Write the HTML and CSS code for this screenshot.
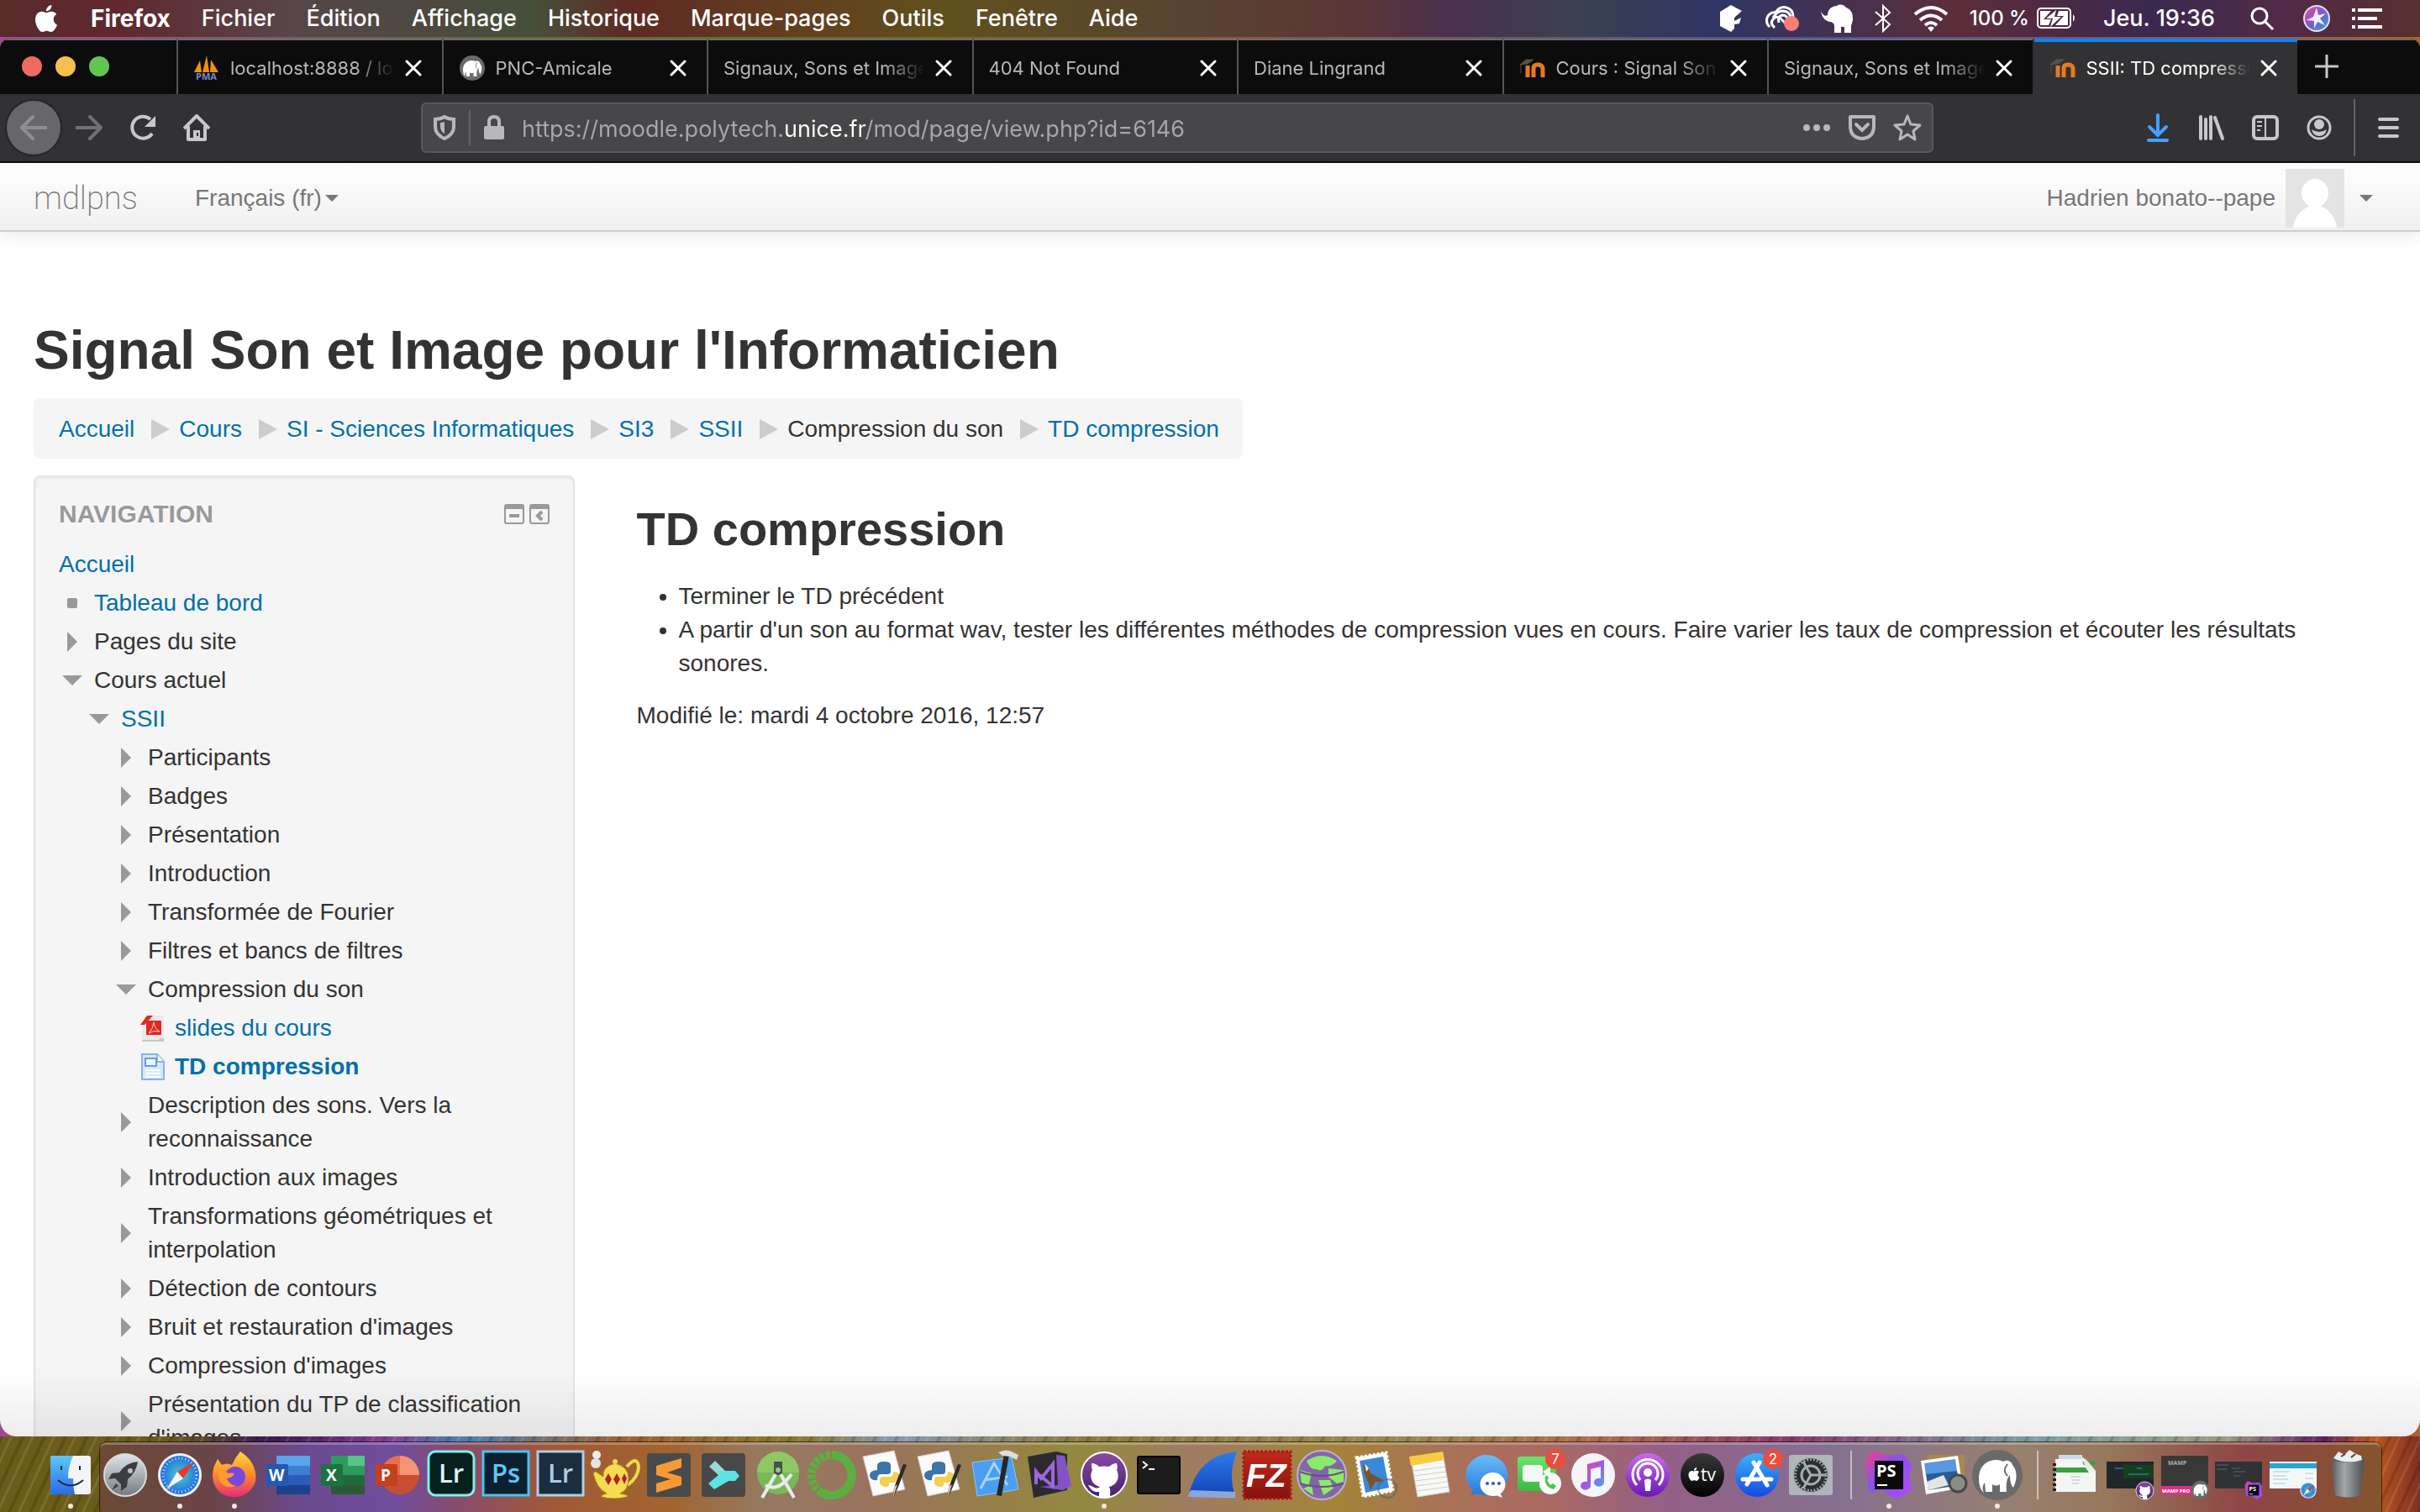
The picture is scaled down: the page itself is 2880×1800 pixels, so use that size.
FILE: index.html
```html
<!DOCTYPE html>
<html lang="fr">
<head>
<meta charset="utf-8">
<title>SSII: TD compression</title>
<link rel="stylesheet" href="styles.css">
</head>
<body>
<svg class="defs" width="0" height="0" aria-hidden="true">
  <defs>
    <linearGradient id="gFinder" x2="0" y2="1"><stop offset="0" stop-color="#5cc8fa"/><stop offset="1" stop-color="#2a6be8"/></linearGradient>
    <linearGradient id="gSilver" x2="0" y2="1"><stop offset="0" stop-color="#dfe6ea"/><stop offset="1" stop-color="#767a7c"/></linearGradient>
    <radialGradient id="gSafari"><stop offset="0" stop-color="#4fd0c8"/><stop offset="1" stop-color="#1f6be0"/></radialGradient>
    <linearGradient id="gFox" x2="0" y2="1"><stop offset="0" stop-color="#ffd83a"/><stop offset=".5" stop-color="#ff8a2a"/><stop offset="1" stop-color="#e5297c"/></linearGradient>
    <linearGradient id="gBlue" x2="0" y2="1"><stop offset="0" stop-color="#6bbcf8"/><stop offset="1" stop-color="#2a78d8"/></linearGradient>
    <linearGradient id="gStore" x2="0" y2="1"><stop offset="0" stop-color="#3cb4fb"/><stop offset="1" stop-color="#1648e0"/></linearGradient>
    <linearGradient id="gGreen" x2="0" y2="1"><stop offset="0" stop-color="#68e56a"/><stop offset="1" stop-color="#3bb944"/></linearGradient>
    <linearGradient id="gPod" x2="0" y2="1"><stop offset="0" stop-color="#c86cf0"/><stop offset="1" stop-color="#6a18b4"/></linearGradient>
    <linearGradient id="gTv" x2="0" y2="1"><stop offset="0" stop-color="#3a3a3c"/><stop offset="1" stop-color="#000"/></linearGradient>
    <linearGradient id="gRed" x2="0" y2="1"><stop offset="0" stop-color="#c22a1c"/><stop offset="1" stop-color="#86130c"/></linearGradient>
    <linearGradient id="gStorm" x2="1" y2="1"><stop offset="0" stop-color="#ff3c82"/><stop offset=".4" stop-color="#8a50f0"/><stop offset="1" stop-color="#b24af8"/></linearGradient>
    <linearGradient id="gNote" x2="1" y2="1"><stop offset="0" stop-color="#f8466c"/><stop offset=".55" stop-color="#9a5cf0"/><stop offset="1" stop-color="#38b4f8"/></linearGradient>
    <linearGradient id="gGit" x2="0" y2="1"><stop offset="0" stop-color="#8a4ca4"/><stop offset="1" stop-color="#43206c"/></linearGradient>
    <linearGradient id="gSiri" x2="1" y2="1"><stop offset="0" stop-color="#f04a90"/><stop offset=".5" stop-color="#7a5ad0"/><stop offset="1" stop-color="#2aa8d8"/></linearGradient>
    <linearGradient id="gTrash" x2="1" y2="0"><stop offset="0" stop-color="#55585a"/><stop offset=".4" stop-color="#a4a8aa"/><stop offset="1" stop-color="#4c4f51"/></linearGradient>
    <linearGradient id="gShark" x2="0" y2="1"><stop offset="0" stop-color="#2c7cf0"/><stop offset="1" stop-color="#1243b0"/></linearGradient>
  </defs>
  <symbol id="apple" viewBox="0 0 24 24"><path fill="currentColor" d="M12.152 6.896c-.948 0-2.415-1.078-3.96-1.04-2.04.027-3.91 1.183-4.961 3.014-2.117 3.675-.546 9.103 1.519 12.09 1.013 1.454 2.208 3.09 3.792 3.039 1.52-.065 2.09-.987 3.935-.987 1.831 0 2.35.987 3.96.948 1.637-.026 2.676-1.48 3.676-2.948 1.156-1.688 1.636-3.325 1.662-3.415-.039-.013-3.182-1.221-3.22-4.857-.026-3.04 2.48-4.494 2.597-4.559-1.429-2.09-3.623-2.324-4.39-2.376-2-.156-3.675 1.09-4.61 1.09zM15.53 3.83c.843-1.012 1.4-2.427 1.245-3.83-1.207.052-2.662.805-3.532 1.818-.78.896-1.454 2.338-1.273 3.714 1.338.104 2.715-.688 3.559-1.701"/></symbol>
  <symbol id="close" viewBox="0 0 20 20"><path d="M2 2l16 16M18 2L2 18" stroke="#fff" stroke-width="3" stroke-linecap="round"/></symbol>
  <symbol id="elephant" viewBox="0 0 40 34"><path fill="#fff" d="M20 2c4-3 9-1 11 2 6 2 8 7 8 13 0 5-2 7-2 10v7h-8v-7h-4v7h-8v-8c0-3-2-4-4-5-6 0-11-5-12-13 2 5 5 7 8 5 0-6 4-11 11-11z"/></symbol>
  <symbol id="mamp" viewBox="0 0 64 64"><circle cx="32" cy="32" r="30" fill="#6a6a6a"/><path fill="#fff" d="M10 36c0-15 10-22 21-22 4 0 6 1 8 2 5-3 10 0 11 4 6 7 6 17 1 27-3-3-4-9-4-15-3 3-5 8-4 20h-8v-9c-3 2-6 2-9 0v9h-8l-1-11c-3 4-3 8-1 12-4-3-6-9-6-17z"/><path d="M44 19c-4 5-5 9 0 14" fill="none" stroke="#6a6a6a" stroke-width="2"/></symbol>
  <symbol id="moodle" viewBox="0 0 32 32"><path d="M10 27V13M17 27V16q0-4 5-4t6 4v11" fill="none" stroke="#e87a1e" stroke-width="5"/><path d="M1 12L8 6l9 0-7 5zM2 12v10" fill="#54504c" stroke="#54504c" stroke-width="1"/></symbol>
  <symbol id="cat" viewBox="0 0 64 64"><circle cx="32" cy="32" r="27" fill="url(#gGit)" stroke="#fff" stroke-width="2"/><path fill="#fff" d="M17 18c4 0 7 2 9 4q6-1 12 0c2-2 5-4 9-4 1 4 1 6 0 8 4 8 1 18-9 20 2 3 1 8 1 13H26v-7c-7 1-10-3-13-8 5 0 7 5 13 3l1-1c-10-2-13-12-9-20-1-2-1-4-1-8z"/></symbol>
  <symbol id="safari" viewBox="0 0 64 64"><circle cx="32" cy="32" r="26" fill="#eef1f4"/><circle cx="32" cy="32" r="23" fill="url(#gSafari)"/><circle cx="32" cy="32" r="20" fill="none" stroke="#c9e4fa" stroke-width="3" stroke-dasharray="1 3"/><path d="M49 16L36 36l-7-8z" fill="#e8382e"/><path d="M16 49l13-21 7 8z" fill="#f4f4f4"/></symbol>
  <symbol id="storm" viewBox="0 0 64 64"><path fill="url(#gStorm)" d="M4 16L12 3l19 6 18-2 10 12-3 16 4 14-19 12L24 50 8 52z"/><path fill="#0a0a0a" d="M15 15h34v34H15z"/><text x="17" y="34" fill="#fff" class="ic" font-size="20">PS</text><path fill="#fff" d="M18 43h12v2H18z"/></symbol>
  <symbol id="python" viewBox="0 0 64 64"><path fill="#fbfbfb" stroke="#ccc" d="M4 10l37-7 13 46-38 8z"/><path d="M21 29v-8q0-5 8-5t8 4v8q0 3-4 3h-8q-4 0-4 7-8 1-9-5t9-7z" fill="#3a74a8"/><path d="M24 42v-4q0-4 4-4h8q4 0 4-6 7 0 8 6t-8 7h-5q1 5-4 5t-7-4z" fill="#f3cf4c"/><path d="M56 20L46 46l-6 13 1-12 11-28z" fill="#2a2a2a"/><path d="M45 43l-5 16 1-13z" fill="#d8c8a0"/></symbol>
</svg>

<header class="menubar">
  <nav class="menus">
    <button class="apple" aria-label="Pomme"><svg width="32" height="32"><use href="#apple"/></svg></button>
    <button class="app">Firefox</button>
    <button>Fichier</button>
    <button>Édition</button>
    <button>Affichage</button>
    <button>Historique</button>
    <button>Marque-pages</button>
    <button>Outils</button>
    <button>Fenêtre</button>
    <button>Aide</button>
  </nav>
  <div class="status">
    <svg width="28" height="32" viewBox="0 0 28 32"><path fill="#fff" d="M1 8L14 0l13 7-9 8v4l8-4-2 7-6 1v5l-4 4-13-7z"/></svg>
    <svg width="44" height="32" viewBox="0 0 44 32"><path d="M8 26q-6-6-2-13 4-5 9-4 5-8 13-6 8 2 8 11M14 27q-6-5-2-10 4-5 9-1l6 6M12 15q5-8 12-8 9 1 9 9M19 21q-2-8 4-9 5 0 7 5" fill="none" stroke="#fff" stroke-width="3"/><circle cx="34" cy="22" r="9" fill="#fb7d78"/></svg>
    <svg width="40" height="34"><use href="#elephant"/></svg>
    <svg width="22" height="34" viewBox="0 0 22 34"><path d="M2 9l17 15-8 8V2l8 8L2 25" fill="none" stroke="#fff" stroke-width="2"/></svg>
    <svg width="44" height="32" viewBox="0 0 44 32"><path d="M3 11q19-16 38 0M9 18q13-11 26 0M15 24q7-6 14 0" fill="none" stroke="#fff" stroke-width="4"/><path d="M18 27q4-3 8 0l-4 5z" fill="#fff"/></svg>
    <span class="charge">100 % <svg width="48" height="28" viewBox="0 0 48 28"><rect x="2" y="2" width="39" height="23" rx="4" fill="none" stroke="#fff" stroke-width="2"/><path fill="#fff" d="M5 5h13L9 15h9l-3 7H5zM27 5h11v17H23l10-11h-8zM44 9q4 4 0 9z"/><path fill="#fff" d="M24 4L12 14h8l-3 10 13-12h-8z"/></svg></span>
    <span class="clock">Jeu. 19:36</span>
    <svg class="search" width="32" height="32" viewBox="0 0 32 32"><circle cx="13" cy="13" r="9" fill="none" stroke="#fff" stroke-width="3"/><path d="M20 20l9 9" stroke="#fff" stroke-width="3"/></svg>
    <svg width="34" height="34" viewBox="0 0 34 34"><circle cx="17" cy="17" r="15" fill="url(#gSiri)" stroke="#e8e0f0" stroke-width="2"/><path d="M17 4l2 9 9-2-7 6 6 8-9-4-4 8 0-9-9-1 8-4z" fill="#fff" opacity=".9"/></svg>
    <svg width="38" height="32" viewBox="0 0 38 32"><path d="M1 6h4M8 6h29M1 16h4M8 16h23M1 26h4M8 26h29" stroke="#fff" stroke-width="4"/></svg>
  </div>
</header>

<div class="window">
  <div class="tabbar">
    <div class="lights"><button class="light red" aria-label="Fermer"></button><button class="light yellow" aria-label="Réduire"></button><button class="light green" aria-label="Agrandir"></button></div>
    <div class="tabs">
      <div class="tab"><svg width="32" height="32" viewBox="0 0 32 32"><path fill="#f29111" d="M1 21L8 7l2 14zM11 21L16 1l3 20zM20 21l1-15 9 15z"/><text x="3" y="30" class="ic" font-size="11" fill="#8088c8">PMA</text></svg><button class="title">localhost:8888 / localhost</button><button class="x" aria-label="Fermer l'onglet"><svg width="20" height="20"><use href="#close"/></svg></button></div>
      <div class="tab"><svg width="32" height="32"><use href="#mamp"/></svg><button class="title">PNC-Amicale</button><button class="x" aria-label="Fermer l'onglet"><svg width="20" height="20"><use href="#close"/></svg></button></div>
      <div class="tab"><button class="title">Signaux, Sons et Images</button><button class="x" aria-label="Fermer l'onglet"><svg width="20" height="20"><use href="#close"/></svg></button></div>
      <div class="tab"><button class="title">404 Not Found</button><button class="x" aria-label="Fermer l'onglet"><svg width="20" height="20"><use href="#close"/></svg></button></div>
      <div class="tab"><button class="title">Diane Lingrand</button><button class="x" aria-label="Fermer l'onglet"><svg width="20" height="20"><use href="#close"/></svg></button></div>
      <div class="tab"><svg width="32" height="32"><use href="#moodle"/></svg><button class="title">Cours : Signal Son et</button><button class="x" aria-label="Fermer l'onglet"><svg width="20" height="20"><use href="#close"/></svg></button></div>
      <div class="tab"><button class="title">Signaux, Sons et Images</button><button class="x" aria-label="Fermer l'onglet"><svg width="20" height="20"><use href="#close"/></svg></button></div>
      <div class="tab active"><svg width="32" height="32"><use href="#moodle"/></svg><button class="title">SSII: TD compression</button><button class="x" aria-label="Fermer l'onglet"><svg width="20" height="20"><use href="#close"/></svg></button></div>
    </div>
    <button class="newtab" aria-label="Nouvel onglet"><svg width="28" height="28" viewBox="0 0 28 28"><path d="M14 1v26M1 14h26" stroke="#c8c8ca" stroke-width="3" stroke-linecap="round"/></svg></button>
  </div>

  <div class="toolbar">
    <div class="navbtns">
      <button class="back" aria-label="Précédent"><svg width="32" height="32" viewBox="0 0 32 32"><path d="M31 16H2M15 3L2 16l13 13" fill="none" stroke="#8e8e90" stroke-width="4" stroke-linecap="round" stroke-linejoin="round"/></svg></button>
      <button aria-label="Suivant"><svg width="32" height="32" viewBox="0 0 32 32"><path d="M1 16h29M17 3l13 13-13 13" fill="none" stroke="#717173" stroke-width="4" stroke-linecap="round" stroke-linejoin="round"/></svg></button>
      <button aria-label="Actualiser"><svg width="32" height="32" viewBox="0 0 32 32"><path d="M27 23A13 13 0 1 1 25 6" fill="none" stroke="#c8c8ca" stroke-width="4"/><path d="M31 2v13H18z" fill="#c8c8ca"/></svg></button>
      <button aria-label="Accueil"><svg width="32" height="32" viewBox="0 0 32 32"><path d="M1 17L16 2l15 15M6 14v16h20V14" fill="none" stroke="#c8c8ca" stroke-width="4" stroke-linejoin="round"/><path d="M12 30V19h8v11z" fill="#c8c8ca"/><path d="M17 22v4" stroke="#323234" stroke-width="2"/></svg></button>
    </div>
    <div class="urlbar">
      <svg width="28" height="30" viewBox="0 0 28 30"><path d="M14 2q5 3 11 3v9q0 9-11 14Q3 23 3 14V5q6 0 11-3z" fill="none" stroke="#b8b8ba" stroke-width="4"/><path d="M14 8q-2 1-5 1v5q0 5 5 8z" fill="#b8b8ba"/></svg>
      <i class="bar"></i>
      <svg width="26" height="30" viewBox="0 0 26 30"><path d="M1 15q0-2 2-2h20q2 0 2 2v12q0 2-2 2H3q-2 0-2-2z" fill="#b8b8ba"/><path d="M7 14V8q0-6 6-6t6 6v6" fill="none" stroke="#b8b8ba" stroke-width="4"/></svg>
      <input class="url" type="text" aria-label="Adresse" value="https://moodle.polytech.unice.fr/mod/page/view.php?id=6146">
      <svg width="34" height="32" viewBox="0 0 34 32"><circle cx="5" cy="16" r="4" fill="#b8b8ba"/><circle cx="17" cy="16" r="4" fill="#b8b8ba"/><circle cx="29" cy="16" r="4" fill="#b8b8ba"/></svg>
      <svg width="34" height="32" viewBox="0 0 34 32"><path d="M3 3h28v11q0 14-14 15Q3 28 3 14z" fill="none" stroke="#b8b8ba" stroke-width="4" stroke-linejoin="round"/><path d="M10 12l7 7 7-7" fill="none" stroke="#b8b8ba" stroke-width="4" stroke-linecap="round"/></svg>
      <svg width="34" height="34" viewBox="0 0 34 34"><path d="M17 3l4 10 11 1-8 7 2 10-9-6-9 6 2-10-8-7 11-1z" fill="none" stroke="#b8b8ba" stroke-width="3" stroke-linejoin="round"/></svg>
    </div>
    <div class="tools">
      <button aria-label="Téléchargements"><svg width="32" height="34" viewBox="0 0 32 34"><path d="M16 2v24M6 16l10 10 10-10M5 32h22" fill="none" stroke="#45a1ff" stroke-width="4" stroke-linecap="round"/></svg></button>
      <button aria-label="Bibliothèque"><svg width="32" height="32" viewBox="0 0 32 32"><path d="M3 3v26M9 6v23M15 3v26M20 4l9 25" stroke="#c8c8ca" stroke-width="4" stroke-linecap="round"/></svg></button>
      <button aria-label="Panneaux latéraux"><svg width="32" height="32" viewBox="0 0 32 32"><rect x="2" y="3" width="28" height="26" rx="4" fill="none" stroke="#c8c8ca" stroke-width="4"/><path d="M16 3v26M6 9h6M6 14h6M6 19h4" stroke="#c8c8ca" stroke-width="2"/></svg></button>
      <button aria-label="Compte"><svg width="32" height="32" viewBox="0 0 32 32"><circle cx="16" cy="16" r="13" fill="none" stroke="#c8c8ca" stroke-width="3"/><circle cx="16" cy="12" r="6" fill="#c8c8ca"/><path d="M7 18q9 6 18 0-2 8-9 8t-9-8z" fill="#c8c8ca"/></svg></button>
      <i class="bar"></i>
      <button aria-label="Menu"><svg width="28" height="28" viewBox="0 0 28 28"><path d="M4 4h21M4 14h21M4 24h21" stroke="#c8c8ca" stroke-width="4" stroke-linecap="round"/></svg></button>
    </div>
  </div>

  <div class="page">
    <header class="site">
      <a class="brand" href="#">mdlpns</a>
      <button class="drop">Français (fr) <i class="caret"></i></button>
      <a class="user" href="#"><span>Hadrien bonato--pape</span><svg width="70" height="70" viewBox="0 0 70 70"><path fill="#e4e4e4" d="M0 0h70v70H0z"/><ellipse cx="35" cy="29" rx="16" ry="17" fill="#fff"/><path fill="#fff" d="M9 70q2-18 20-26V38h12v6q18 8 20 26z"/></svg><i class="caret"></i></a>
    </header>
    <main>
      <h1>Signal Son et Image pour l'Informaticien</h1>
      <nav class="crumbs">
        <a href="#">Accueil</a><i></i><a href="#">Cours</a><i></i><a href="#">SI - Sciences Informatiques</a><i></i><a href="#">SI3</a><i></i><a href="#">SSII</a><i></i><span>Compression du son</span><i></i><a href="#">TD compression</a>
      </nav>
      <div class="columns">
        <aside class="block">
          <div class="blockhead">
            <h2>Navigation</h2>
            <button aria-label="Masquer le bloc"><svg width="24" height="24" viewBox="0 0 24 24"><rect x="1" y="1" width="22" height="22" rx="2" fill="#f5f5f5" stroke="#999" stroke-width="2"/><path d="M1 1h22v5H1zM6 12h12v4H6z" fill="#999"/></svg></button>
            <button aria-label="Ancrer le bloc"><svg width="24" height="24" viewBox="0 0 24 24"><rect x="1" y="1" width="22" height="22" rx="2" fill="#f5f5f5" stroke="#999" stroke-width="2"/><path d="M1 1h22v5H1z" fill="#999"/><path d="M15 9l-5 5 5 5" fill="none" stroke="#999" stroke-width="4"/></svg></button>
          </div>
          <a class="root" href="#">Accueil</a>
          <ul class="tree">
            <li><p class="dot"><a href="#">Tableau de bord</a></p></li>
            <li><p class="shut">Pages du site</p></li>
            <li><p class="open">Cours actuel</p>
              <ul>
                <li><p class="open"><a href="#">SSII</a></p>
                  <ul>
                    <li><p class="shut">Participants</p></li>
                    <li><p class="shut">Badges</p></li>
                    <li><p class="shut">Présentation</p></li>
                    <li><p class="shut">Introduction</p></li>
                    <li><p class="shut">Transformée de Fourier</p></li>
                    <li><p class="shut">Filtres et bancs de filtres</p></li>
                    <li><p class="open">Compression du son</p>
                      <ul>
                        <li><p><svg width="32" height="32" viewBox="0 0 32 32"><path d="M3 28h26v4H3z" fill="#c8c8c8"/><path d="M3 10L11 1h18v23l-6 6H3z" fill="#e9e9ee"/><path d="M1 12L9 1h7L6 12zM8 7h18v17H8z" fill="#dd2a22"/><path d="M11 22q5-5 6-13 1 8 7 11-7-2-13 2z" fill="none" stroke="#ffc8c4" stroke-width="1"/></svg><a href="#">slides du cours</a></p></li>
                        <li><p><svg width="32" height="32" viewBox="0 0 32 32"><path d="M3 1h18l8 9v21H3z" fill="#d6e8fb" stroke="#8ab2ea" stroke-width="2"/><path d="M21 1v9h8" fill="#fff" stroke="#8ab2ea" stroke-width="2"/><path d="M7 6h13v9H7z" fill="#eef6fe" stroke="#6c9ce0" stroke-width="2"/><path d="M7 20h18M7 24h18M7 28h18" stroke="#fff" stroke-width="2"/></svg><a class="current" href="#">TD compression</a></p></li>
                      </ul>
                    </li>
                    <li><p class="shut">Description des sons. Vers la reconnaissance</p></li>
                    <li><p class="shut">Introduction aux images</p></li>
                    <li><p class="shut">Transformations géométriques et interpolation</p></li>
                    <li><p class="shut">Détection de contours</p></li>
                    <li><p class="shut">Bruit et restauration d'images</p></li>
                    <li><p class="shut">Compression d'images</p></li>
                    <li><p class="shut">Présentation du TP de classification d'images</p></li>
                  </ul>
                </li>
              </ul>
            </li>
          </ul>
        </aside>
        <article>
          <h2>TD compression</h2>
          <ul>
            <li>Terminer le TD précédent</li>
            <li>A partir d'un son au format wav, tester les différentes méthodes de compression vues en cours. Faire varier les taux de compression et écouter les résultats sonores.</li>
          </ul>
          <p>Modifié le: mardi 4 octobre 2016, 12:57</p>
        </article>
      </div>
    </main>
  </div>
</div>

<footer class="dock">
  <div class="group apps">
    <span class="run"><svg viewBox="0 0 64 64"><rect x="8" y="9" width="48" height="46" rx="3" fill="#f2f4f8"/><path d="M11 9h24q-6 12-6 27h6q0 10 2 19H11q-3 0-3-3V12q0-3 3-3z" fill="url(#gFinder)"/><path d="M21 21v5M43 21v5" stroke="#1c2a40" stroke-width="2"/><path d="M17 38q15 13 30 0" fill="none" stroke="#1c2a40" stroke-width="2"/></svg></span>
    <span><svg viewBox="0 0 64 64"><circle cx="32" cy="32" r="25" fill="url(#gSilver)" stroke="#d6dade" stroke-width="2"/><path d="M47 16q-14 1-22 13l-9 1-4 7 8-1 7 7 0 8 7-5 1-9q10-8 12-21zM21 42l-5 8 8-5z" fill="#3a3d42"/><circle cx="38" cy="27" r="3" fill="#b8bec2"/></svg></span>
    <span class="run"><svg><use href="#safari"/></svg></span>
    <span class="run"><svg viewBox="0 0 64 64"><path d="M39 4q12 8 16 18 7 18-5 29-10 9-23 7Q7 54 6 33q0-9 4-16l2-4 5 7q6-3 12 0 4-9 10-16z" fill="url(#gFox)"/><circle cx="33" cy="34" r="12" fill="#7a48d8"/><path d="M13 27q8-1 11 3 5-1 8 0-2 5-9 6 2 7 11 9-13 4-19-5-3-6-2-13z" fill="#ff9a30"/></svg></span>
    <span><svg viewBox="0 0 64 64"><path fill="#5aa4ec" d="M18 9h40v12H18z"/><path fill="#3f7ed0" d="M18 21h40v11H18z"/><path fill="#2a5cb8" d="M18 32h40v12H18z"/><path fill="#1d428c" d="M18 44h40v11H18z"/><rect x="6" y="19" width="26" height="26" rx="2" fill="#2358b4"/><text x="9" y="39" class="ic" font-size="19" fill="#fff">W</text></svg></span>
    <span><svg viewBox="0 0 64 64"><path fill="#2f9a5c" d="M18 9h40v46H18z"/><path fill="#58c488" d="M38 9h20v12H38z"/><path fill="#1f6b3c" d="M18 32h20v12H18zM38 32h20v12H38z"/><path fill="#2a5a36" d="M18 44h40v11H18z"/><rect x="6" y="19" width="26" height="26" rx="2" fill="#1b7440"/><text x="12" y="39" class="ic" font-size="19" fill="#fff">X</text></svg></span>
    <span><svg viewBox="0 0 64 64"><circle cx="35" cy="32" r="23" fill="#c85030"/><path d="M35 9a23 23 0 0 1 23 23H35z" fill="#f59474"/><path d="M35 9a23 23 0 0 0-23 23h23z" fill="#e8704c"/><rect x="6" y="19" width="26" height="26" rx="2" fill="#c2411f"/><text x="12" y="39" class="ic" font-size="19" fill="#fff">P</text></svg></span>
    <span><svg viewBox="0 0 64 64"><rect x="5" y="4" width="54" height="52" rx="8" fill="#06201e" stroke="#7ff0e8" stroke-width="3"/><text x="17" y="41" class="ad">Lr</text></svg></span>
    <span><svg viewBox="0 0 64 64"><path fill="#0c2030" stroke="#48c4f4" stroke-width="3" d="M5 4h54v52H5z"/><text x="15" y="41" class="ad blue">Ps</text></svg></span>
    <span><svg viewBox="0 0 64 64"><path fill="#1a2e40" stroke="#b0cce4" stroke-width="3" d="M5 4h54v52H5z"/><text x="17" y="41" class="ad pale">Lr</text></svg></span>
    <span><svg viewBox="0 0 64 64"><circle cx="10" cy="8" r="5" fill="#eee"/><circle cx="9" cy="18" r="6" fill="#e4e4e4"/><path d="M46 22q12-14 14 0 0 12-13 22" fill="none" stroke="#f0d848" stroke-width="4"/><path d="M6 30q2-4 6 0l6 4q-2-12 14-16 16 4 16 18 0 14-10 18 12 2 8 4-16 4-30 0-2-2 6-4Q10 48 6 30z" fill="#f4dc50" stroke="#a88414"/><circle cx="32" cy="16" r="3" fill="#f4dc50"/><path d="M24 30l4 7-4 7-4-7zM34 30l4 7-4 7-4-7zM43 30l3 6-3 7-3-7z" fill="#b4202c"/></svg></span>
    <span><svg viewBox="0 0 64 64"><rect x="6" y="6" width="52" height="52" rx="4" fill="#4a4a4a"/><path fill="#f89a34" d="M17 21l30-9v11l-17 6 17 5v10l-30 9V42l17-5-17-5z"/></svg></span>
    <span><svg viewBox="0 0 64 64"><rect x="6" y="6" width="52" height="52" rx="4" fill="#484848"/><path fill="#9ad8d8" d="M15 22l7-7 17 17H26z"/><path fill="#5ce4e4" d="M26 27h20l5 6-5 6h-8L21 49l-7-7 12-10z"/></svg></span>
    <span><svg viewBox="0 0 64 64"><circle cx="32" cy="30" r="25" fill="#79b858"/><path d="M7 29a25 25 0 0 1 50 0z" fill="#8ec866"/><path d="M27 16h10v16H27z" fill="#46504c"/><path d="M29 31L13 59M35 31l16 28M17 44q15 9 31-13" fill="none" stroke="#e8ecec" stroke-width="4"/><circle cx="32" cy="26" r="3" fill="#9ac880"/></svg></span>
    <span><svg viewBox="0 0 64 64"><path d="M32 8a24 24 0 1 1-12 45" fill="none" stroke="#5cb040" stroke-width="10"/><path d="M20 53A24 24 0 0 1 32 8" fill="none" stroke="#5cb040" stroke-width="10" stroke-dasharray="5 2"/></svg></span>
    <span><svg><use href="#python"/></svg></span>
    <span><svg><use href="#python"/></svg></span>
    <span><svg viewBox="0 0 64 64"><path fill="#4a9ef0" stroke="#8cc8ff" d="M4 17l47-6 8 38-49 8z"/><path d="M14 48l16-30 16 26M18 38l28-4" fill="none" stroke="#a8d4fc" stroke-width="3"/><path d="M48 8l-9 49-6-1 9-49z" fill="#262626"/><path d="M35 5q10-5 18 0l6 3-2 6-8-4-9-1z" fill="#dcdcdc"/></svg></span>
    <span><svg viewBox="0 0 64 64"><path fill="#2c2a30" d="M6 10l34-6 13 3v43l-40 9z"/><path fill="#8452c8" d="M40 8l10 1 8 36-10 5-28-4 22-2z"/><path d="M16 28l6 8 14-17v26L16 29v14z" fill="none" stroke="#9a68dc" stroke-width="4"/></svg></span>
    <span class="run"><svg><use href="#cat"/></svg></span>
    <span><svg viewBox="0 0 64 64"><rect x="7" y="10" width="50" height="44" rx="2" fill="#1c1c1c" stroke="#000" stroke-width="2"/><path d="M13 16l5 4-5 4M20 25h7" fill="none" stroke="#fff" stroke-width="2"/></svg></span>
    <span><svg viewBox="0 0 64 64"><path fill="url(#gShark)" d="M3 58Q14 8 61 4q-11 26-2 54z"/><path fill="#b8d0f4" d="M3 58q1-7 4-8l52 2v7z" opacity=".7"/></svg></span>
    <span><svg viewBox="0 0 64 64"><path fill="url(#gRed)" stroke="#a81c12" stroke-width="3" stroke-dasharray="3 2" d="M4 4h56v56H4z"/><text x="7" y="46" class="ic fz" font-size="39" fill="#fff">FZ</text></svg></span>
    <span><svg viewBox="0 0 64 64"><circle cx="32" cy="32" r="29" fill="#8466a8" stroke="#c0b0d4" stroke-width="2"/><path d="M14 15q18-12 36 0-6 8-14 6-4 8-10 4-8 1-12-10zM6 26l14 4-4 16-8-4zM40 24l18 2v14l-8 2-10-8zM28 38l14 0 4 10-12 8zM10 48l10-4 2 12z" fill="#88ec68"/><path d="M6 28q26 10 52 0M6 42q26 8 52 0" stroke="#6c4c90" stroke-width="2" fill="none"/></svg></span>
    <span><svg viewBox="0 0 64 64"><path fill="#fff" stroke="#fff" stroke-width="3" stroke-dasharray="3 2" d="M8 11l36-6 8 46-36 7z"/><path fill="#3a88d8" d="M12 15l28-5 7 37-28 6z"/><path fill="#7a5230" d="M17 17q6 4 8 13l12 6 4 4-10 0-6 10-3-10q-7-11-5-23z"/><path fill="#f0ece4" d="M18 18l5 6-3 4z"/><circle cx="45" cy="48" r="11" fill="none" stroke="#59616c" stroke-width="2" opacity=".6"/></svg></span>
    <span><svg viewBox="0 0 64 64"><path fill="#f8f8f6" stroke="#ccc" d="M9 12l38-6 8 46-38 6z"/><path fill="#f8cc40" d="M7 10l40-6 2 10-40 7z"/><path d="M12 27l38-5M13 33l38-5M14 39l38-5M15 45l38-5M16 51l38-5" stroke="#cfcfcf"/></svg></span>
    <span><svg viewBox="0 0 64 64"><path fill="url(#gBlue)" d="M32 8a26 24 0 1 1-9 46l-8 2 3-6A25 24 0 0 1 32 8z"/><path fill="#fff" d="M42 29a15 14 0 1 1-1 28 15 14 0 0 1 1-28zM50 53l3 6-8-3z"/><circle cx="35" cy="42" r="2" fill="#2060b0"/><circle cx="42" cy="42" r="2" fill="#2060b0"/><circle cx="49" cy="42" r="2" fill="#2060b0"/></svg></span>
    <span><svg viewBox="0 0 64 64"><rect x="6" y="10" width="46" height="41" rx="4" fill="url(#gGreen)"/><rect x="12" y="20" width="24" height="20" rx="4" fill="#f4f8f4"/><path d="M36 28l9-6v14z" fill="#f4f8f4"/><circle cx="45" cy="42" r="13" fill="#fafafa"/><path d="M39 34q-2 12 10 15l3-4-4-3-3 2-4-6 2-2-2-4z" fill="#48c850"/></svg><b>7</b></span>
    <span><svg viewBox="0 0 64 64"><circle cx="32" cy="32" r="26" fill="#f5f5f9"/><path d="M25 19l20-5v27a6 5 0 1 1-4-5V22l-12 3v20a6 5 0 1 1-4-5z" fill="url(#gNote)"/></svg></span>
    <span><svg viewBox="0 0 64 64"><circle cx="32" cy="32" r="26" fill="url(#gPod)"/><circle cx="32" cy="29" r="5" fill="#fff"/><path d="M28 38q4-3 8 0l-1 13h-6z" fill="#fff"/><path d="M23 38a12 12 0 1 1 18 0M19 44a18 18 0 1 1 26 0" fill="none" stroke="#fff" stroke-width="3"/></svg></span>
    <span><svg viewBox="0 0 64 64"><circle cx="32" cy="32" r="26" fill="url(#gTv)"/><svg x="14" y="22" width="16" height="18" color="#fff"><use href="#apple"/></svg><text x="30" y="39" class="ic thin" font-size="21" fill="#fff">tv</text></svg></span>
    <span><svg viewBox="0 0 64 64"><circle cx="32" cy="32" r="26" fill="url(#gStore)"/><path d="M35 17L20 43M28 17l16 27M15 37h20M40 37h9" stroke="#fff" stroke-width="5" stroke-linecap="round"/></svg><b>2</b></span>
    <span><svg viewBox="0 0 64 64"><rect x="6" y="8" width="52" height="48" rx="3" fill="#aeb6ba"/><circle cx="32" cy="32" r="20" fill="#2c2e30"/><circle cx="32" cy="32" r="19" fill="none" stroke="#9a9ea0" stroke-width="4" stroke-dasharray="2 2"/><circle cx="32" cy="32" r="11" fill="none" stroke="#a8acae" stroke-width="3"/><path d="M32 32h18M32 32L23 16M32 32l-9 16" stroke="#a8acae" stroke-width="3"/></svg></span>
  </div>
  <i class="rule"></i>
  <div class="group recent">
    <span class="run"><svg><use href="#storm"/></svg></span>
    <span><svg viewBox="0 0 64 64"><path fill="#a88850" d="M12 8h45v34H12z"/><path fill="#fff" d="M5 15l44-6 6 38-44 8z"/><path fill="#5898e0" d="M9 18l37-5 2 15-37 4z"/><path fill="#2a5c9c" d="M11 31l37-4 3 17-37 6z"/><path fill="#e4e4e0" d="M12 40l20-8 6 12-24 6z"/><circle cx="49" cy="42" r="10" fill="#8c8c88" stroke="#48484a" stroke-width="3"/></svg></span>
    <span class="run"><svg><use href="#mamp"/></svg></span>
  </div>
  <i class="rule"></i>
  <div class="group files">
    <span><svg viewBox="0 0 64 64"><path fill="#c8dcec" d="M12 8h28v12H12z"/><path fill="#f4f6f4" d="M8 13h36l12 14v25H8z"/><path fill="#3aa040" d="M8 23h36l4 6H8zM40 16h16v4H42z"/><path fill="#e8e8e4" d="M38 9q10 6 18 19l-10-2z"/><path d="M7 18v36" stroke="#222" stroke-width="4" stroke-dasharray="3 3"/><path d="M26 34h12M27 38h10M28 42h8" stroke="#bbb"/></svg></span>
    <span><svg viewBox="0 0 64 64"><path fill="#20262c" d="M4 16h56v32H4z"/><path fill="#15401c" d="M24 20h36v16H24z"/><path d="M14 24h10M30 31h24M40 24h6" stroke="#4a8cd0"/><svg x="37" y="38" width="25" height="25"><use href="#cat"/></svg></svg></span>
    <span><svg viewBox="0 0 64 64"><path fill="#383838" d="M4 9h56v36H4z"/><path fill="#e0308c" d="M4 45h56v10H4z"/><text x="12" y="20" class="ic" font-size="7" fill="#aaa">MAMP</text><text x="5" y="53" class="ic" font-size="6" fill="#fff">MAMP PRO</text><svg x="39" y="38" width="23" height="23"><use href="#mamp"/></svg></svg></span>
    <span><svg viewBox="0 0 64 64"><path fill="#303236" d="M4 16h56v32H4z"/><path d="M6 20h14M6 25h12M24 24h10M26 28h14M26 33h8" stroke="#5c6670"/><svg x="38" y="38" width="24" height="24"><use href="#storm"/></svg></svg></span>
    <span><svg viewBox="0 0 64 64"><path fill="#f4f8fb" d="M4 16h56v32H4z"/><path fill="#28a4d8" d="M4 18h56v6H4z"/><path d="M8 28h20M8 33h16M8 37h18M8 42h15M46 30h10M46 36h10" stroke="#a4c8e0"/><svg x="38" y="38" width="24" height="24"><use href="#safari"/></svg></svg></span>
    <span><svg viewBox="0 0 64 64"><path fill="url(#gTrash)" d="M12 12h40l-5 44q-15 5-30 0z"/><ellipse cx="32" cy="12" rx="20" ry="5" fill="#5c5f61"/><path d="M15 12l6-8 7 4 6-6 8 5 6 2 1 5q-18 6-34-2z" fill="#eee"/><path d="M24 10l5-3M36 11l5-4" stroke="#444" stroke-width="2"/></svg></span>
  </div>
</footer>
</body>
</html>
```
FILE: styles.css
```css
* { box-sizing: border-box; }
body {
  margin: 0;
  height: 100vh;
  display: flex;
  flex-direction: column;
  overflow: hidden;
  font: 28px/40px "Liberation Sans", Arial, sans-serif;
  color: #333;
  background: linear-gradient(90deg, #a04a90, #60702a 25%, #8a5a3a 50%, #4a50a0 75%, #b06030);
}
button { border: 0; padding: 0; background: none; font: inherit; color: inherit; display: flex; align-items: center; }
a { color: #0070a8; text-decoration: none; }
h1, h2, p, ul { margin: 0; padding: 0; }
svg { flex: none; display: block; }
.defs { position: absolute; }
.ic { font-family: "Open Sans", sans-serif; font-weight: 700; }
.thin { font-weight: 400; }
.fz { font-family: "Liberation Sans", sans-serif; font-style: italic; }
.ad { font: 600 31px "Open Sans", sans-serif; fill: #dff4f4; }
.blue { fill: #58ccf8; }
.pale { fill: #b0cce4; }

/* System menu bar */
.menubar {
  height: 44px;
  flex: none;
  display: flex;
  justify-content: space-between;
  align-items: center;
  padding: 0 44px 0 39px;
  color: #fff;
  font: 500 27px/44px Inter, sans-serif;
  background: linear-gradient(90deg, #592a2a, #60292f 5%, #57464a 12%, #4c4a40 18%, #46503a 22%, #5f2a24 26%, #633c20 32%, #60501c 39%, #584530 48%, #5a3636 56%, #4b3050 60%, #3b4150 65%, #2f3565 71%, #5c2d3a 81%, #3b2850 89%, #502a48 94%, #573030);
}
.menus, .status { display: flex; align-items: center; }
.menus { gap: 37px; }
.app { font-weight: 700; font-size: 28px; }
.status { gap: 24px; }
.charge { display: flex; align-items: center; gap: 8px; font-size: 24px; }
.clock { margin: 0 16px 0 8px; }
.search { margin-right: 8px; }

/* Browser window */
.window {
  flex: 1;
  min-height: 0;
  margin-top: 2px;
  display: flex;
  flex-direction: column;
  overflow: hidden;
  border-radius: 12px 12px 20px 20px;
}
.tabbar { height: 66px; flex: none; display: flex; background: #0c0c0d; box-shadow: inset 0 2px #6c6c6e; font: 22px/32px Inter, sans-serif; color: #b8b8ba; }
.lights { width: 210px; padding-left: 26px; display: flex; align-items: center; gap: 16px; }
.light { width: 24px; height: 24px; border-radius: 50%; }
.red { background: #ed6a5e; }
.yellow { background: #f5bf4f; }
.green { background: #61c554; }
.tabs { flex: 1; display: flex; }
.tab { flex: 1; min-width: 0; display: flex; align-items: center; gap: 12px; padding: 3px 24px 0 18px; border-left: 2px solid #555557; }
.title {
  flex: 1;
  min-width: 0;
  overflow: hidden;
  white-space: nowrap;
  text-align: left;
  -webkit-mask-image: linear-gradient(90deg, #000 calc(100% - 48px), transparent);
  mask-image: linear-gradient(90deg, #000 calc(100% - 48px), transparent);
}
.active { background: #323234; color: #fff; border-left-color: #323234; box-shadow: inset 0 4px #0a84ff; }
.newtab { width: 146px; padding-left: 21px; }

.toolbar { height: 82px; flex: none; display: flex; align-items: center; padding-right: 24px; background: #323234; border-bottom: 2px solid #0c0c0d; }
.navbtns { width: 501px; padding-left: 8px; display: flex; align-items: center; gap: 32px; }
.back { width: 64px; height: 64px; border-radius: 50%; background: #676769; justify-content: center; box-shadow: 0 0 0 2px #262628; margin-right: -14px; }
.urlbar { flex: 1; height: 60px; display: flex; align-items: center; gap: 20px; padding: 0 12px; background: #474749; border: 2px solid #59595b; border-radius: 6px; }
.bar { width: 2px; height: 42px; background: #606470; margin: 0 -5px; }
.url {
  flex: 1;
  min-width: 0;
  border: 0;
  outline: 0;
  padding: 2px 0 0;
  height: 42px;
  font: 27px/40px Inter, sans-serif;
  color: transparent;
  background: linear-gradient(90deg, #a8a8aa 313px, #fff 313px, #fff 410px, #a8a8aa 410px);
  -webkit-background-clip: text;
  background-clip: text;
}
.tools { width: 555px; display: flex; align-items: center; justify-content: flex-end; gap: 32px; }
.tools .bar { height: 68px; margin: 0 -7px; }

/* Moodle page */
.page { flex: 1; min-height: 0; overflow: hidden; background: #fff; position: relative; }
.page::after { content: ""; position: absolute; inset: auto 0 0 0; height: 80px; background: linear-gradient(transparent, rgba(0, 0, 0, .07)); pointer-events: none; }
.site {
  height: 82px;
  display: flex;
  align-items: center;
  padding: 4px 56px 0 40px;
  color: #777;
  text-shadow: 0 2px #fff;
  background: linear-gradient(#fff, #f0f0f0);
  border-bottom: 2px solid #d0d0d0;
  box-shadow: 0 2px 20px rgba(0, 0, 0, .1);
}
.site a { color: #777; }
.brand { font: 200 38px/40px Roboto, sans-serif; width: 192px; }
.drop { gap: 4px; }
.caret { border: 8px solid transparent; border-top-color: #777; border-bottom: 0; }
.user { margin-left: auto; display: flex; align-items: center; gap: 12px; }
.user .caret { margin-left: 6px; }
main { padding: 101px 42px 0 40px; }
h1 { font-size: 64px; line-height: 80px; margin-bottom: 17px; }
.crumbs { display: flex; width: fit-content; align-items: center; padding: 17px 28px 15px 30px; border-radius: 8px; background: #f5f5f5; text-shadow: 0 2px #fff; }
.crumbs i { margin: 0 11px 0 20px; border: solid transparent; border-width: 12px 0 12px 22px; border-left-color: #ccc; }
.columns { margin-top: 20px; display: grid; grid-template-columns: 23% minmax(0, 1fr); gap: 74px; }
.block { padding: 24px 28px; background: #f5f5f5; border: 2px solid #e3e3e3; border-radius: 8px; box-shadow: inset 0 2px 2px rgba(0, 0, 0, .05); }
.blockhead { display: flex; align-items: center; gap: 6px; margin-bottom: 20px; }
.blockhead h2 { flex: 1; font-size: 30px; line-height: 40px; color: #999; text-transform: uppercase; text-shadow: 0 2px #fff; }
.root { display: block; margin-bottom: 6px; }
.tree, .tree ul { list-style: none; }
.tree ul { padding-left: 32px; }
.tree p { display: flex; align-items: center; gap: 10px; margin-bottom: 6px; }
.tree p::before { flex: none; border: 0 solid transparent; }
.tree .shut::before { content: ""; margin: 0 10px; border-width: 12px 0 12px 12px; border-left-color: #999; }
.tree .open::before { content: ""; margin: 0 4px; border-width: 12px 12px 0 12px; border-top-color: #999; }
.tree .dot::before { content: ""; width: 12px; height: 12px; margin: 0 10px; border-radius: 2px; background: #999; }
.current { font-weight: 700; }
article h2 { margin: 24px 0 20px; font-size: 56px; line-height: 80px; }
article ul { padding-left: 50px; margin-bottom: 22px; }

/* Dock */
.dock {
  height: 90px;
  flex: none;
  display: flex;
  align-items: center;
  padding: 2px 54px 0 52px;
  position: relative;
  background:
    repeating-linear-gradient(115deg, rgba(0, 0, 0, .15) 0 4px, transparent 4px 11px, rgba(255, 255, 255, .1) 11px 14px, transparent 14px 23px),
    linear-gradient(90deg, #6b5c1a 7%, #3a1a50 11%, #8a3a9a 16%, #4a80b0 19%, #a06030 26%, #8a7a2a 33%, #8a9ab0 37%, #8a7a3a 45%, #9a8a50 58%, #b06a4a 66%, #8a3a6a 74%, #7aa0a0 84%, #9a9a80 92%, #602060 96%, #c05a20 98%, #803020);
}
.dock::before {
  content: "";
  position: absolute;
  inset: 7px 46px 0 119px;
  border-radius: 8px 8px 0 0;
  border-top: 3px solid rgba(255, 255, 255, .25);
  box-shadow: 0 0 0 1px rgba(0, 0, 0, .6);
  background: linear-gradient(90deg, #6b4a35, #6a4448 5%, #6b4a90 9%, #704c9c 13%, #8a4c68 16%, #a05a35 20%, #a2642f 25%, #967962 29%, #9a735c 34%, #93893e 43%, #a07c62 48%, #a38438 54%, #a97258 59%, #ab6a60 63%, #935f88 69%, #857090 76%, #988070 84%, #96785c 88%, #8f4545 94%, #85552d);
}
.group { position: relative; display: flex; min-width: 0; }
.apps { flex: 33; }
.recent { flex: 3; }
.files { flex: 6; }
.group span { flex: 1; min-width: 0; display: flex; justify-content: center; position: relative; }
.group span > svg { width: 64px; height: 64px; }
.run::after { content: ""; position: absolute; bottom: -8px; width: 6px; height: 6px; border-radius: 50%; background: #f4e8d8; }
.group b { position: absolute; top: 1px; right: 1px; width: 24px; height: 24px; border-radius: 50%; background: #ea4c3e; color: #fff; font: 17px/24px Inter, sans-serif; text-align: center; }
.rule { position: relative; width: 2px; height: 58px; margin: 0 12px 0 14px; background: rgba(255, 255, 255, .5); }
```
